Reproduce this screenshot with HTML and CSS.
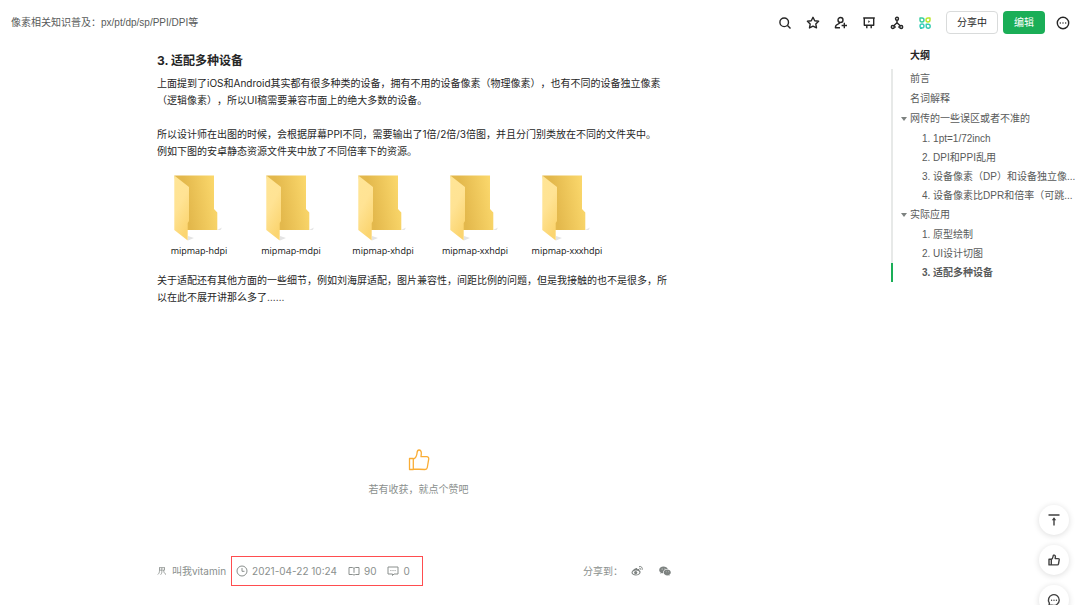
FILE: index.html
```html
<!DOCTYPE html>
<html lang="zh-CN">
<head>
    <meta charset="UTF-8">
    <meta name="viewport" content="width=device-width, initial-scale=1.0">
    <title>像素相关知识普及：px/pt/dp/sp/PPI/DPI等</title>
    <link rel="stylesheet" href="styles.css">
</head>
<body>
    <!-- shared folder drawing -->
    <svg class="defs" width="0" height="0" aria-hidden="true">
        <defs>
            <linearGradient id="back" x1="0" y1="0.6" x2="1" y2="0.4">
                <stop offset="0.3" stop-color="#e3b84c"/>
                <stop offset="1" stop-color="#fbd86c"/>
            </linearGradient>
            <linearGradient id="front" x1="0" y1="0" x2="0.4" y2="1">
                <stop offset="0" stop-color="#ffe596"/>
                <stop offset="0.5" stop-color="#ffe394"/>
                <stop offset="1" stop-color="#fbd571"/>
            </linearGradient>
            <symbol id="folder" viewBox="0 0 50 67">
                <path d="M43 55l5-2.500-1.500 2.500zM14 65.500l6-2.500-6-2z" fill="#e4e4e4"/>
                <path d="M0.300 0.500H40V34l3.300 3.500V55H10z" fill="url(#back)"/>
                <path d="M0.300 0.500L15 12v34l-1.300 2V65.500L0.300 55z" fill="url(#front)"/>
            </symbol>
        </defs>
    </svg>

    <header class="header">
        <span class="doc-title">像素相关知识普及：px/pt/dp/sp/PPI/DPI等</span>
        <div class="tools">
            <button class="icon-btn" aria-label="搜索"><svg viewBox="0 0 14 14"><circle cx="6.200" cy="6.300" r="4.300"/><path d="M9.500 9.600l3 3"/></svg></button>
            <button class="icon-btn" aria-label="收藏"><svg viewBox="0 0 14 14"><path d="M7 1.300l1.700 3.500 3.900.5-2.800 2.700.7 3.900L7 10.100l-3.500 1.800.7-3.900-2.800-2.700 3.900-.5z"/></svg></button>
            <button class="icon-btn" aria-label="邀请协作"><svg viewBox="0 0 14 14"><circle cx="6.500" cy="4" r="2.500"/><path d="M5.400 6.400c.3 1-.2 1.400-1.400 1.800-1.700.6-2.600 1.500-2.600 3.600H6M10.300 6.800v5.400M7.600 9.500H13"/></svg></button>
            <button class="icon-btn" aria-label="演示"><svg viewBox="0 0 14 14"><path d="M1.200 2h11.600M2.300 2v7.200h9.400V2M4.800 9.200v3M9.200 9.200v3"/><path d="M6.200 4.300v2.600l2-1.300z" class="solid"/></svg></button>
            <button class="icon-btn" aria-label="结构"><svg viewBox="0 0 14 14"><circle cx="7" cy="2.700" r="1.500"/><circle cx="2.800" cy="11" r="1.500"/><circle cx="11.200" cy="11" r="1.500"/><path d="M7 4.200v2.600L3.800 9.800M7 6.800l3.200 3M4.300 11h1.500M8.200 11h1.500"/></svg></button>
            <button class="icon-btn" aria-label="应用"><svg viewBox="0 0 14 14"><path d="M2 2h2a2 2 0 1 1-2 2z" stroke="#36ce9e"/><path d="M12 2h-2a2 2 0 1 0 2 2z" stroke="#b8e62a"/><circle cx="4" cy="10" r="2" stroke="#36cebb"/><path d="M8.200 8.200h2a2 2 0 1 1-2 2zM2 12.200h2" stroke="#35cbb0"/></svg></button>
            <button class="btn share">分享中</button>
            <button class="btn edit">编辑</button>
            <button class="icon-btn" aria-label="更多"><svg viewBox="0 0 14 14"><circle cx="7" cy="7" r="5.700"/><path class="dots" d="M4.300 7h.01M7 7h.01M9.700 7h.01"/></svg></button>
        </div>
    </header>

    <div class="layout">
        <main class="content">
            <article class="article">
                <h3>3. 适配多种设备</h3>
                <p>上面提到了iOS和Android其实都有很多种类的设备，拥有不用的设备像素（物理像素），也有不同的设备独立像素<br>（逻辑像素），所以UI稿需要兼容市面上的绝大多数的设备。</p>
                <p class="spaced">所以设计师在出图的时候，会根据屏幕PPI不同，需要输出了1倍/2倍/3倍图，并且分门别类放在不同的文件夹中。<br>例如下图的安卓静态资源文件夹中放了不同倍率下的资源。</p>
                <div class="folders">
                    <figure><svg><use href="#folder"/></svg><figcaption>mipmap-hdpi</figcaption></figure>
                    <figure><svg><use href="#folder"/></svg><figcaption>mipmap-mdpi</figcaption></figure>
                    <figure><svg><use href="#folder"/></svg><figcaption>mipmap-xhdpi</figcaption></figure>
                    <figure><svg><use href="#folder"/></svg><figcaption>mipmap-xxhdpi</figcaption></figure>
                    <figure><svg><use href="#folder"/></svg><figcaption>mipmap-xxxhdpi</figcaption></figure>
                </div>
                <p>关于适配还有其他方面的一些细节，例如刘海屏适配，图片兼容性，间距比例的问题，但是我接触的也不是很多，所<br>以在此不展开讲那么多了……</p>
            </article>

            <div class="praise">
                <button aria-label="点赞"><svg viewBox="0 0 22 22"><path d="M1.500 9.500h3.800v11H1.500zM5.300 10.200c2.500-1.200 3.500-3.200 3.700-6C9.100 2.200 9.800 1 11 1c1.700 0 2.500 1.600 2.300 3.600L13 7.700h5.700c1.500 0 2.300 1 2 2.400l-1.400 8.400c-.2 1.300-1 2-2.300 2L5.300 20"/></svg></button>
                <span>若有收获，就点个赞吧</span>
            </div>

            <footer class="meta">
                <a class="author" href="#"><svg class="line" viewBox="0 0 12 12"><path d="M2.500 2H9.500M3 2v3h2.800M5.800 2v4.500c0 2-.5 3-1.500 4M3 5c0 2.500-.5 4-2 5.200M9 2v3H6.500M8 5c0 2.500 1 4 2.800 5.200"/></svg>叫我vitamin</a>
                <div class="stats">
                    <span><svg class="line" viewBox="0 0 12 12"><circle cx="6" cy="6" r="5"/><path d="M6 3v3.300h2.500"/></svg>2021-04-22 10:24</span>
                    <span><svg class="line" viewBox="0 0 12 12"><path d="M1 2.500h3.500L6 3.300l1.500-.8H11v7H7.500L6 10l-1.500-.5H1zM6 3.300v4.500"/></svg>90</span>
                    <span><svg class="line" viewBox="0 0 12 12"><path d="M1 2h10v7H7l-1.500 1.500V9H1zM3.400 5.600h1M5.500 5.600h1M7.600 5.600h1"/></svg>0</span>
                </div>
                <div class="share-to">
                    <span>分享到：</span>
                    <a href="#" aria-label="微博"><svg viewBox="0 0 12 12"><path fill-rule="evenodd" d="M4.800 3.200c1-.4 1.700 0 1.400 1 1.400-.5 2.500-.2 2.100 1 2.600.8 1.300 5.300-3.400 5.300C2.300 10.500.5 9.300.5 7.600c0-1.600 2-3.600 4.300-4.400zM5 5.400c-2 0-3.400 1-3.400 2.200S3 9.600 4.900 9.600s3.500-1 3.500-2.200S6.900 5.400 5 5.400z"/><circle cx="4.700" cy="7.600" r="1.600"/><path class="wave" d="M8.300 3.200c1-.1 1.500.5 1.300 1.400M8.200 1.500c2.100-.4 3.500 1.200 3 3.300"/></svg></a>
                    <a href="#" aria-label="微信"><svg viewBox="0 0 12 12"><path d="M4.500 1.500C2.100 1.500.2 3 .2 4.900c0 1.100.6 2 1.500 2.600l-.4 1.200 1.500-.7c.5.200 1 .2 1.400.2-.4-2.300 1.500-4.200 4.500-4.200-.3-1.500-2.200-2.500-4.200-2.500z"/><path d="M8.300 4.600c-2 0-3.600 1.200-3.600 2.900s1.600 2.900 3.600 2.900l1.100-.2 1.200.6-.3-1c.9-.5 1.500-1.400 1.500-2.300 0-1.700-1.600-2.900-3.500-2.900z"/><g fill="#fff"><circle cx="3.100" cy="4" r=".5"/><circle cx="5.900" cy="4" r=".5"/><circle cx="7.200" cy="6.800" r=".4"/><circle cx="9.500" cy="6.800" r=".4"/></g></svg></a>
                </div>
            </footer>
        </main>

        <nav class="outline" aria-label="大纲">
            <h2>大纲</h2>
            <ul>
                <li><a href="#">前言</a></li>
                <li><a href="#">名词解释</a></li>
                <li class="parent"><a href="#">网传的一些误区或者不准的</a></li>
                <li class="sub"><a href="#">1. 1pt=1/72inch</a></li>
                <li class="sub"><a href="#">2. DPI和PPI乱用</a></li>
                <li class="sub"><a href="#">3. 设备像素（DP）和设备独立像...</a></li>
                <li class="sub"><a href="#">4. 设备像素比DPR和倍率（可跳...</a></li>
                <li class="parent"><a href="#">实际应用</a></li>
                <li class="sub"><a href="#">1. 原型绘制</a></li>
                <li class="sub"><a href="#">2. UI设计切图</a></li>
                <li class="sub active"><a href="#">3. 适配多种设备</a></li>
            </ul>
        </nav>
    </div>

    <div class="float-bar">
        <button aria-label="回到顶部"><svg viewBox="0 0 14 14"><path d="M1.500 2h11M7 12.500V5.500"/><path class="solid" d="M4.800 7.300L7 4.300l2.200 3z"/></svg></button>
        <button aria-label="点赞"><svg viewBox="0 0 14 14"><path d="M2 6.200h2.300v5.700H2zM4.300 6.500C6 5.500 6 4 6.200 2.800c.2-1.100 2.200-.9 2.200.8L8.200 5.600h3c.8 0 1.100.5 1 1.200l-.7 4c-.1.700-.5 1.100-1.200 1.100h-6"/></svg></button>
        <button aria-label="评论"><svg viewBox="0 0 14 14"><path d="M2 12.300l.4-2.200A5.400 5.400 0 1 1 5 12.100z"/><path class="dots" d="M4.600 7.200h.01M7 7.200h.01M9.400 7.200h.01"/></svg></button>
    </div>
</body>
</html>
```
FILE: styles.css
```css
* {
    box-sizing: border-box;
}
body {
    margin: 0;
    font-family: Inter, "Noto Sans CJK SC", sans-serif;
    font-size: 10px;
    line-height: 17px;
    text-spacing-trim: space-all;
    color: #262626;
    background: #fff;
}
h2, h3, p, ul, figure {
    margin: 0;
    padding: 0;
}
a {
    color: inherit;
    text-decoration: none;
}
button {
    font: inherit;
    color: inherit;
    padding: 0;
    border: 0;
    background: none;
    cursor: pointer;
}
svg {
    display: block;
}
.defs {
    position: absolute;
}

/* header */
.header {
    display: flex;
    align-items: center;
    justify-content: space-between;
    height: 45px;
    padding: 0 10px 0 11px;
}
.doc-title,
.outline {
    font-family: "Liberation Sans", "Noto Sans CJK SC", sans-serif;
    color: #585a5a;
}
.tools {
    display: flex;
    align-items: center;
    gap: 14px;
}
.icon-btn svg,
.float-bar svg {
    width: 14px;
    height: 14px;
    fill: none;
    stroke: #262626;
    stroke-width: 1.4;
    stroke-linejoin: round;
}
.float-bar svg {
    stroke: #404040;
}
.tools .solid,
.float-bar .solid {
    fill: #404040;
    stroke: none;
}
.dots {
    stroke-width: 1.4;
    stroke-linecap: round;
}
.btn {
    height: 23px;
    border-radius: 4px;
}
.share {
    width: 52px;
    border: 1px solid #d9dbdb;
}
.edit {
    width: 42px;
    margin: 0 -3px 0 -9px;
    color: #fff;
    background: #1aae57;
}

/* page columns */
.layout {
    display: flex;
}
.content {
    flex: 1;
    display: flex;
    flex-direction: column;
    align-items: center;
    padding: 6px 54px 20px 0;
}
.article,
.meta {
    width: 100%;
    max-width: 523px;
}
.article h3 {
    margin-bottom: 4px;
    font-size: 12px;
    line-height: 20px;
}
.article .spaced {
    margin-top: 17px;
}
.folders {
    display: flex;
    gap: 8px;
    padding: 15px 0 13px;
}
.folders figure {
    width: 84px;
    text-align: center;
}
.folders svg {
    width: 50px;
    height: 67px;
    margin: 0 auto;
}
.folders figcaption {
    font-family: "Open Sans", sans-serif;
    font-size: 9px;
    color: #111;
}

/* praise */
.praise {
    display: flex;
    flex-direction: column;
    align-items: center;
    gap: 10px;
    padding: 143px 0 58px;
    color: #8a8f8d;
}
.praise svg {
    width: 22px;
    height: 22px;
    fill: none;
    stroke: #faad35;
    stroke-width: 1.3;
    stroke-linejoin: round;
}

/* author, date and share line */
.meta {
    display: flex;
    align-items: center;
    color: #8a8f8d;
}
.meta svg {
    width: 12px;
    height: 12px;
    fill: #7d8280;
}
.meta .line {
    fill: none;
    stroke: #8a8f8d;
}
.meta .author svg {
    width: 10px;
}
.author,
.stats,
.stats span,
.share-to {
    display: flex;
    align-items: center;
}
.author {
    gap: 5px;
}
.stats {
    gap: 11px;
    height: 30px;
    margin-left: 5px;
    padding: 0 12px 0 4px;
    border: 1px solid #ff4d4f;
}
.stats span {
    gap: 4px;
}
.share-to {
    gap: 16px;
    margin-left: auto;
    padding-right: 9px;
}
.share-to span {
    margin-right: -8px;
}
.share-to .wave {
    fill: none;
    stroke: #7d8280;
}

/* outline */
.outline {
    width: 189px;
}
.outline h2 {
    padding: 2px 0 5px 19px;
    font-size: 10px;
    color: #262626;
}
.outline ul {
    list-style: none;
    border-left: 2px solid #e7e9e8;
}
.outline li {
    height: 20px;
    padding-left: 17px;
    line-height: 20px;
    white-space: nowrap;
}
.outline .parent {
    display: flex;
    align-items: center;
    gap: 3px;
    padding-left: 8px;
}
.outline .parent::before {
    content: "";
    border: 3px solid transparent;
    border-top: 4px solid #7d8280;
    border-bottom: 0;
}
.outline .sub {
    height: 19px;
    padding-left: 29px;
    line-height: 19px;
}
.outline .active {
    margin-left: -2px;
    padding-left: 29px;
    border-left: 2px solid #1aae57;
    font-weight: 700;
}

/* floating round buttons */
.float-bar {
    position: fixed;
    right: 11px;
    bottom: -10px;
    display: flex;
    flex-direction: column;
    gap: 10px;
}
.float-bar button {
    display: flex;
    align-items: center;
    justify-content: center;
    width: 30px;
    height: 30px;
    border-radius: 50%;
    background: #fff;
    box-shadow: 0 1px 6px rgba(0, 0, 0, 0.14);
}
```
